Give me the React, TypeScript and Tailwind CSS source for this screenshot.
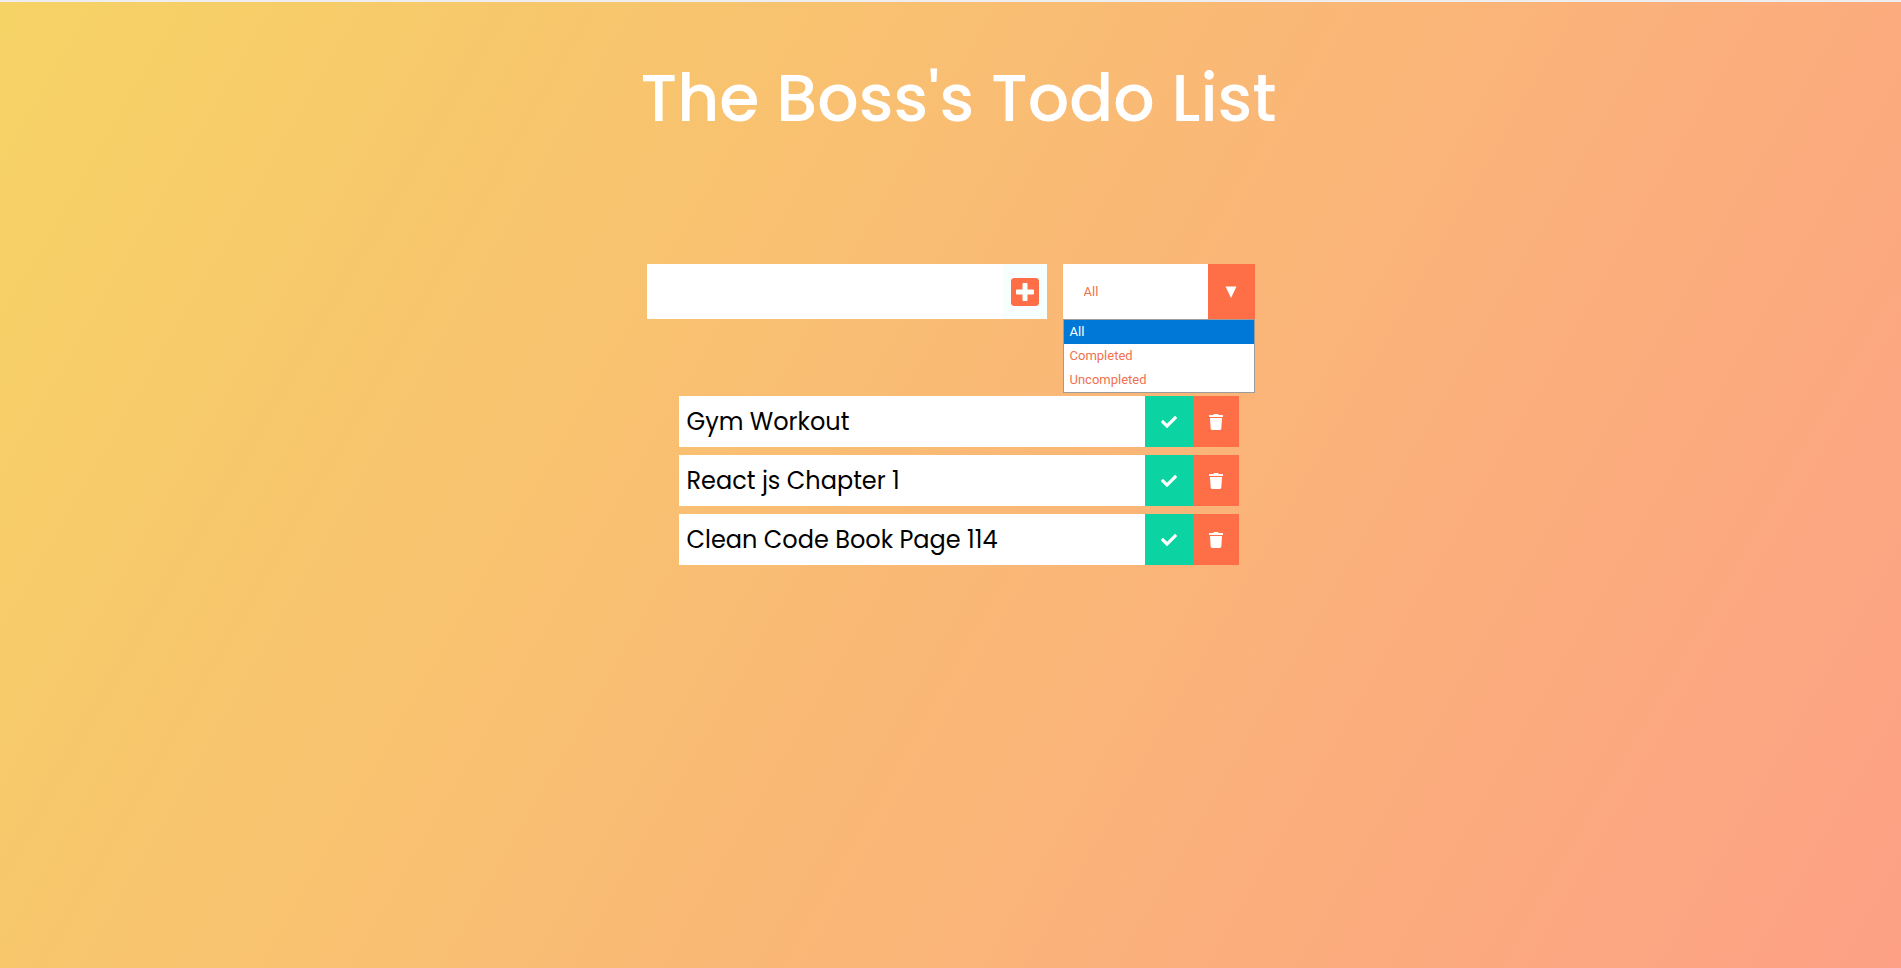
import { useState } from "react";
import type { FormEvent } from "react";
import { FaCheck, FaPlusSquare, FaTrash } from "react-icons/fa";

const filters = ["All", "Completed", "Uncompleted"];

type Todo = { id: number; text: string; done: boolean };

const initialTodos: Todo[] = [
  { id: 1, text: "Gym Workout", done: false },
  { id: 2, text: "React js Chapter 1", done: false },
  { id: 3, text: "Clean Code Book Page 114", done: false },
];

export default function App() {
  const [todos, setTodos] = useState(initialTodos);
  const [draft, setDraft] = useState("");
  const [filter, setFilter] = useState("All");
  const [open, setOpen] = useState(true);

  const addTodo = (event: FormEvent) => {
    event.preventDefault();
    if (!draft.trim()) return;
    setTodos([...todos, { id: Date.now(), text: draft, done: false }]);
    setDraft("");
  };

  const toggle = (id: number) =>
    setTodos(todos.map((t) => (t.id === id ? { ...t, done: !t.done } : t)));

  const visible = todos.filter(
    (t) => filter === "All" || t.done === (filter === "Completed")
  );

  return (
    <div className="min-h-screen border-t-2 border-[#eeeef0] bg-[linear-gradient(120deg,#f6d365,#fda085)] font-[Poppins,Inter,sans-serif] text-black">
      <header className="flex h-48 items-center justify-center pl-4">
        <h1 className="text-center text-[65px] leading-none font-medium text-white">The Boss's Todo List</h1>
      </header>

      <form onSubmit={addTodo} className="flex flex-wrap items-center justify-center gap-4 pt-[70px]">
        <div className="flex h-[55px] w-full max-w-[400px] bg-white">
          <input
            type="text"
            aria-label="New todo"
            value={draft}
            onChange={(e) => setDraft(e.target.value)}
            className="min-w-0 flex-1 bg-white px-2 text-2xl outline-none"
          />
          <button
            type="submit"
            aria-label="Add todo"
            className="flex w-11 items-center justify-center bg-[#f7fffe] text-[32px] text-[#ff6f47]"
          >
            <FaPlusSquare />
          </button>
        </div>

        <div className="relative flex h-[55px] w-48">
          <select
            aria-label="Filter todos"
            value={filter}
            onChange={(e) => setFilter(e.target.value)}
            className="min-w-0 flex-1 appearance-none bg-white pl-[21px] font-[Roboto,sans-serif] text-[13px] text-[#f0714f] outline-none"
          >
            {filters.map((f) => (
              <option key={f}>{f}</option>
            ))}
          </select>
          <button
            type="button"
            aria-label="Show filters"
            aria-expanded={open}
            onClick={() => setOpen(!open)}
            className="flex w-[47px] items-center justify-center bg-[#ff6f47] text-white"
          >
            <svg viewBox="0 0 12 12" className="size-3" fill="currentColor" aria-hidden="true">
              <path d="M0.5 0.5h11L6 12z" />
            </svg>
          </button>
          {open && (
            <ul
              role="listbox"
              aria-label="Filters"
              className="absolute inset-x-0 top-full z-10 border border-[#9c9c9c] bg-white font-[Roboto,sans-serif] text-[13px] leading-6 text-[#f0714f]"
            >
              {filters.map((f) => (
                <li
                  key={f}
                  role="option"
                  aria-selected={f === filter}
                  onClick={() => {
                    setFilter(f);
                    setOpen(false);
                  }}
                  className="px-1.5 aria-selected:bg-[#0078d7] aria-selected:text-white"
                >
                  {f}
                </li>
              ))}
            </ul>
          )}
        </div>
      </form>

      <div className="flex justify-center pt-[77px] pl-4">
        <ul className="flex w-full max-w-[560px] flex-col gap-2">
          {visible.map((todo) => (
            <li key={todo.id} className="flex h-[51px] bg-white">
              <span className="flex flex-1 items-center px-2 text-2xl">{todo.text}</span>
              <button
                type="button"
                aria-label="Complete"
                onClick={() => toggle(todo.id)}
                className="flex w-12 items-center justify-center bg-[#0bd4a2] text-base text-white"
              >
                <FaCheck />
              </button>
              <button
                type="button"
                aria-label="Delete"
                onClick={() => setTodos(todos.filter((t) => t.id !== todo.id))}
                className="flex w-[46px] items-center justify-center bg-[#ff6f47] text-base text-white"
              >
                <FaTrash />
              </button>
            </li>
          ))}
        </ul>
      </div>
    </div>
  );
}
